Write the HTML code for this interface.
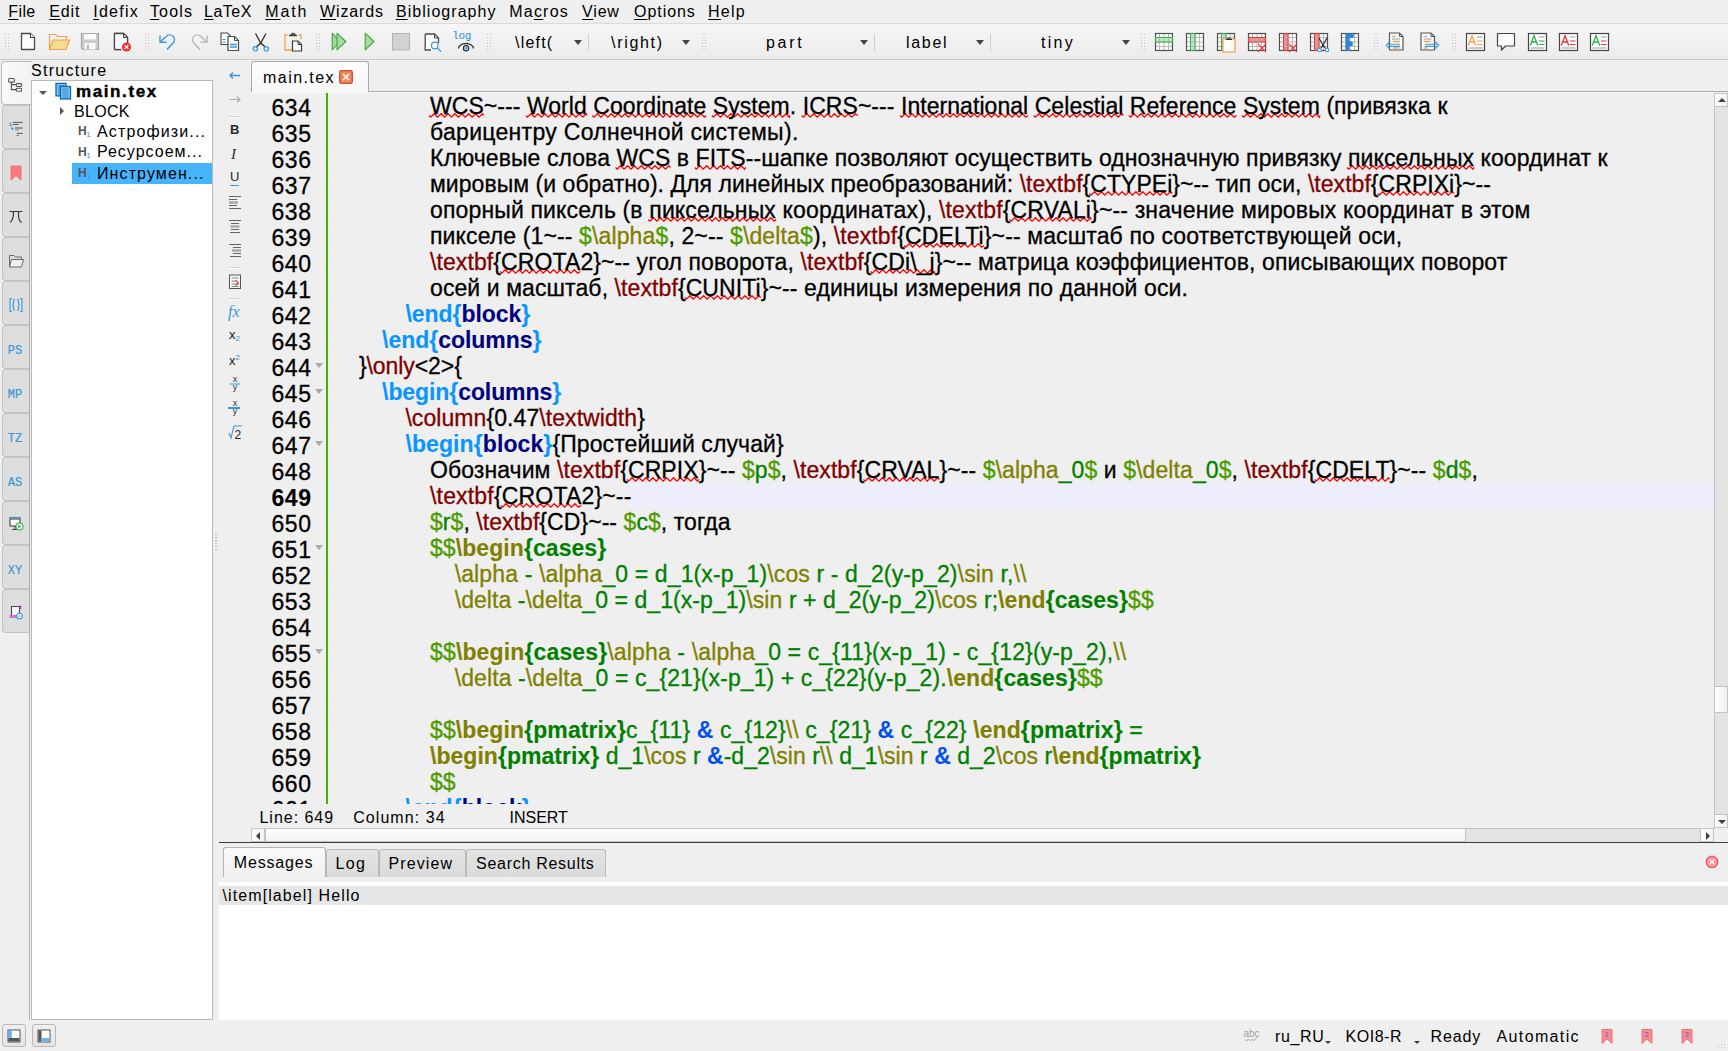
<!DOCTYPE html>
<html><head><meta charset="utf-8">
<style>
*{margin:0;padding:0;box-sizing:border-box}
html,body{width:1728px;height:1051px;overflow:hidden;background:#efefef;font-family:"Liberation Sans",sans-serif;color:#000}
.a{position:absolute}
#menubar{left:0;top:0;width:1728px;height:24px;background:#efefef;border-bottom:1px solid #dadada}
#menubar span{position:absolute;top:2.8px;font-size:16px;line-height:18px;white-space:nowrap}
#menubar ins{text-decoration:underline;text-decoration-thickness:1px;text-underline-offset:2px}
#toolbar{left:0;top:24px;width:1728px;height:36px;background:linear-gradient(#f6f6f6,#ececec);border-bottom:1px solid #c9c9c9}
.grip{position:absolute;width:6px;height:17px;background-image:radial-gradient(circle,#c2c2c2 .7px,transparent 1px);background-size:3px 3px}
.combo{position:absolute;top:10.3px;font-size:16px;line-height:18px;white-space:nowrap}
.carr{position:absolute;top:16px;width:0;height:0;border-left:4px solid transparent;border-right:4px solid transparent;border-top:5px solid #444}
.vsep{position:absolute;top:10px;width:1px;height:17px;background:#cfcfcf}
.ico{position:absolute}
/* editor */
#editor{left:251px;top:93px;width:1463px;height:711px;background:#efefef;overflow:hidden;-webkit-text-stroke:.3px currentColor}
.ln{position:absolute;left:0;width:60.6px;text-align:right;font-size:23px;height:26px;line-height:30px;letter-spacing:.6px}
.ln.cur{font-weight:bold;-webkit-text-stroke:.1px currentColor}
.tx{position:absolute;white-space:pre;font-size:23px;height:26px;line-height:26px}
.curl{position:absolute;left:78px;width:1385px;height:26px;background:#eeedfb}
.gline{position:absolute;left:75px;top:0;width:2px;height:711px;background:#3cb400}
.fold{position:absolute;left:64px;width:0;height:0;border-left:4px solid transparent;border-right:4px solid transparent;border-top:5px solid #a8a8a8}
k{color:#800000}
bg{color:#0a96ff;font-weight:bold;-webkit-text-stroke:.1px currentColor}
en{color:#000080;font-weight:bold;-webkit-text-stroke:.1px currentColor}
dz{color:#4e9c00}
mo{color:#808000}
mg{color:#008000}
mgb{color:#008000;font-weight:bold;-webkit-text-stroke:.1px currentColor}
mob{color:#808000;font-weight:bold;-webkit-text-stroke:.1px currentColor}
am{color:#0050f0;font-weight:bold;-webkit-text-stroke:.1px currentColor}
u{text-decoration:none}

.vtab{position:absolute;left:2px;width:27px;height:43.5px;background:#dedede;border:1px solid #c3c3c3;border-right:none;border-radius:4px 0 0 4px}
.vtab.sel{left:1px;width:31px;height:44px;background:linear-gradient(90deg,#f9f9f9,#f3f3f3);border-color:#bdbdbd}
.vt{position:absolute;left:6px;width:18px;text-align:center;font-family:"Liberation Mono",monospace;font-size:12px;color:#3b98d6;line-height:14px;font-weight:normal;-webkit-text-stroke:.2px #3b98d6}
.tt{position:absolute;font-size:16px;line-height:18px;white-space:nowrap}
.tarr{position:absolute;width:0;height:0}
.tarr.down{border-left:4px solid transparent;border-right:4px solid transparent;border-top:4.5px solid #555}
.tarr.right{border-top:4px solid transparent;border-bottom:4px solid transparent;border-left:4.5px solid #555}
.tsel{position:absolute;background:#47b3fb}
.h1i{position:absolute;font-size:12px;line-height:13px;color:#555;font-weight:bold;letter-spacing:-.5px}
.h1i sub{font-size:8px;color:#3b98d6;font-weight:normal;vertical-align:-2px}
.stb{color:#2a2a2a;line-height:16px}
.frac{width:10px;height:16px;font-size:9px;line-height:7px;color:#333;text-align:center}
.frac span{display:block;height:7.5px}
.frac i{position:absolute;left:0;top:7px;width:10px;height:1.5px}
.ui{font-size:16px;line-height:18px;white-space:nowrap;color:#000}
.sbtn{background:linear-gradient(90deg,#fdfdfd,#f2f2f2);border:1px solid #c4c4c4}
.tri{position:absolute;width:0;height:0}
.tri.up{left:2.5px;top:4px;border-left:4px solid transparent;border-right:4px solid transparent;border-bottom:4px solid #404040}
.tri.dn{left:2.5px;top:5px;border-left:4px solid transparent;border-right:4px solid transparent;border-top:4px solid #404040}
.tri.lt{left:4px;top:2.5px;border-top:4px solid transparent;border-bottom:4px solid transparent;border-right:4px solid #404040}
.tri.rt{left:4.5px;top:2.5px;border-top:4px solid transparent;border-bottom:4px solid transparent;border-left:4px solid #404040}
.tri.sm{border-left-width:3px;border-right-width:3px;border-top-width:3px}
.mtab{top:849px;height:28px;background:linear-gradient(#e4e4e4,#dadada);border:1px solid #bababa;border-bottom:none;border-radius:3px 3px 0 0}
.bbtn{width:24px;height:23px;border:1px solid #b8b8b8;border-radius:3px;background:linear-gradient(#f0f0f0,#e4e4e4)}
.bbtn svg{position:absolute;left:0;top:0}
</style></head><body>
<div id="menubar" class="a">
<span style="left:8.3px;letter-spacing:0.37px"><ins>F</ins>ile</span>
<span style="left:49.3px;letter-spacing:0.83px"><ins>E</ins>dit</span>
<span style="left:93.3px;letter-spacing:1.23px"><ins>I</ins>defix</span>
<span style="left:149.9px;letter-spacing:1.19px"><ins>T</ins>ools</span>
<span style="left:204.1px;letter-spacing:0.48px"><ins>L</ins>aTeX</span>
<span style="left:265.3px;letter-spacing:1.81px"><ins>M</ins>ath</span>
<span style="left:320.0px;letter-spacing:0.87px"><ins>W</ins>izards</span>
<span style="left:395.9px;letter-spacing:1.05px"><ins>B</ins>ibliography</span>
<span style="left:509.3px;letter-spacing:1.19px">Ma<ins>c</ins>ros</span>
<span style="left:582.1px;letter-spacing:0.79px"><ins>V</ins>iew</span>
<span style="left:634.1px;letter-spacing:0.93px"><ins>O</ins>ptions</span>
<span style="left:708.1px;letter-spacing:1.2px"><ins>H</ins>elp</span>
</div>
<div id="toolbar" class="a">
<div class="grip" style="left:4px;top:9px"></div>
<svg class="ico" style="left:20px;top:8px" width="16" height="19" viewBox="0 0 16 19"><path d="M1.5 1.5h9l4 4v12h-13z" fill="#fdfdfd" stroke="#4a4a4a" stroke-width="1.3" stroke-linejoin="round"/><path d="M10.5 1.5v4h4" fill="#fff" stroke="#4a4a4a" stroke-width="1.1"/></svg>
<svg class="ico" style="left:48px;top:9px" width="23" height="18" viewBox="0 0 23 18"><path d="M1.5 16.5V1.5h6l2 2h9v3" fill="none" stroke="#f0a050" stroke-width="1.2"/><path d="M1.5 16.5l3.5-9.5h16.5l-3.5 9.5z" fill="#f8dc8e" stroke="#f0a050" stroke-width="1.2" stroke-linejoin="round"/></svg>
<svg class="ico" style="left:80px;top:8px" width="20" height="19" viewBox="0 0 20 19"><path d="M1.5 1.5h17v16h-15.5l-1.5-1.5z" fill="#cbcbcb" stroke="#a8a8a8" stroke-width="1.2"/><rect x="4" y="2" width="12" height="5.5" fill="#fafafa"/><rect x="4.5" y="11" width="11" height="6.5" fill="#fafafa"/><rect x="7" y="12.5" width="2" height="5" fill="#b8b8b8"/></svg>
<svg class="ico" style="left:113px;top:8px" width="20" height="20" viewBox="0 0 20 20"><path d="M1.5 1.5h9l4 4v7M8 17.5h-6.5v-16" fill="#fdfdfd" stroke="#4a4a4a" stroke-width="1.3" stroke-linejoin="round"/><path d="M1.5 1.5h9l4 4v12h-13z" fill="#fdfdfd" stroke="none"/><path d="M1.5 17.5v-16h9l4 4v6" fill="none" stroke="#4a4a4a" stroke-width="1.3"/><path d="M1.5 17.5h7" stroke="#4a4a4a" stroke-width="1.3"/><path d="M10.5 1.5v4h4" fill="none" stroke="#4a4a4a" stroke-width="1.1"/><circle cx="13.5" cy="15" r="4.6" fill="#e8343a"/><path d="M11.6 13.1l3.8 3.8M15.4 13.1l-3.8 3.8" stroke="#fff" stroke-width="1.2"/></svg>
<div class="grip" style="left:144px;top:9px"></div>
<svg class="ico" style="left:158px;top:8px" width="20" height="20" viewBox="0 0 20 20"><path d="M9 17.5l6-6.5a4.6 4.6 0 0 0-6.5-6.8L2 10" fill="none" stroke="#3b98d6" stroke-width="1.4"/><path d="M2 3.5V10.2h6.5" fill="none" stroke="#3b98d6" stroke-width="1.4"/></svg>
<svg class="ico" style="left:189px;top:8px" width="20" height="20" viewBox="0 0 20 20"><path d="M11 17.5l-6-6.5a4.6 4.6 0 0 1 6.5-6.8L18 10" fill="none" stroke="#b4b4b4" stroke-width="1.3"/><path d="M18 3.5V10.2h-6.5" fill="none" stroke="#b4b4b4" stroke-width="1.3"/></svg>
<svg class="ico" style="left:220px;top:8px" width="20" height="20" viewBox="0 0 20 20"><path d="M1 1h6.5l3 3v8.5h-9.5z" fill="#fdfdfd" stroke="#4a4a4a" stroke-width="1.1"/><path d="M2.5 7.5h3M2.5 10h3" stroke="#3b98d6" stroke-width="1.2"/><path d="M8 4.5h6.5l4 4v10h-10.5z" fill="#fdfdfd" stroke="#4a4a4a" stroke-width="1.2"/><path d="M14.5 4.5v4h4" fill="none" stroke="#4a4a4a" stroke-width="1"/><path d="M10 12.5h7M10 15h7" stroke="#3b98d6" stroke-width="1.4"/></svg>
<svg class="ico" style="left:252px;top:8px" width="18" height="20" viewBox="0 0 18 20"><path d="M3.5 1.5l5.2 9.5M14 1.5l-5.2 9.5M8.7 11l-4.5 4M8.7 11l4.5 4" fill="none" stroke="#2a2a2a" stroke-width="1.3"/><circle cx="3.3" cy="16.8" r="2.2" fill="none" stroke="#3b98d6" stroke-width="1.2"/><circle cx="14.2" cy="16.8" r="2.2" fill="none" stroke="#3b98d6" stroke-width="1.2"/></svg>
<svg class="ico" style="left:284px;top:8px" width="19" height="20" viewBox="0 0 19 20"><path d="M3.5 3h-2.5v15h7M14.5 3h2.5v4" fill="none" stroke="#f5a04a" stroke-width="1.3"/><path d="M5 3.5h8M7 3.5a2 2 0 0 1 4 0" fill="none" stroke="#3a3a3a" stroke-width="1.3"/><path d="M8.5 9h5.5l3.5 3.5v6.5h-9z" fill="#fdfdfd" stroke="#3a3a3a" stroke-width="1.2"/><path d="M14 9v3.5h3.5" fill="none" stroke="#3a3a3a" stroke-width="1"/></svg>
<div class="grip" style="left:315px;top:9px"></div>
<svg class="ico" style="left:331px;top:8px" width="16" height="19" viewBox="0 0 16 19"><path d="M1.2 1.2l7.5 8.3-7.5 8.3z" fill="#a6dba6" stroke="#45a045" stroke-width="1.1" stroke-linejoin="round"/><path d="M6 1.2l8.8 8.3-8.8 8.3z" fill="#a6dba6" stroke="#45a045" stroke-width="1.1" stroke-linejoin="round"/></svg>
<svg class="ico" style="left:364px;top:8px" width="11" height="19" viewBox="0 0 11 19"><path d="M1.2 1.2l8.8 8.3-8.8 8.3z" fill="#a6dba6" stroke="#45a045" stroke-width="1.1" stroke-linejoin="round"/></svg>
<svg class="ico" style="left:391px;top:8px" width="20" height="19" viewBox="0 0 20 19"><rect x="1.5" y="1.5" width="17" height="16.5" fill="#d2d2d2" stroke="#b4b4b4" stroke-width="1"/></svg>
<svg class="ico" style="left:424px;top:9px" width="19" height="19" viewBox="0 0 19 19"><path d="M1.2 1h9.3l4 4v12h-13.3z" fill="#fdfdfd"/><path d="M1.2 1h9.3l4 4v5M7 17h-5.8v-16" fill="none" stroke="#4a4a4a" stroke-width="1.3"/><path d="M10.5 1v4h4" fill="none" stroke="#4a4a4a" stroke-width="1"/><circle cx="10.8" cy="12.5" r="3.3" fill="#fdfdfd" stroke="#3b98d6" stroke-width="1.2"/><path d="M13.2 14.8l3.8 3.8" stroke="#3b98d6" stroke-width="1.3"/></svg>
<svg class="ico" style="left:451px;top:6px" width="24" height="22" viewBox="0 0 24 22"><text x="1.5" y="9" font-family="Liberation Mono" font-size="10.5" fill="#3b98d6" stroke="#3b98d6" stroke-width=".2">log</text><path d="M7.5 18.5a7.5 5 0 0 1 15 0" fill="none" stroke="#333" stroke-width="1.3"/><circle cx="15" cy="18.3" r="2.6" fill="#fff" stroke="#333" stroke-width="1.3"/><circle cx="15" cy="18.3" r="1.2" fill="#3b98d6"/></svg>
<div class="grip" style="left:486px;top:9px"></div>
<span class="combo" style="left:515px;letter-spacing:1.2px">\left(</span><div class="carr" style="left:574px"></div><div class="vsep" style="left:588px"></div>
<span class="combo" style="left:611px;letter-spacing:1.7px">\right)</span><div class="carr" style="left:682px"></div><div class="grip" style="left:701px;top:9px"></div>
<span class="combo" style="left:766px;letter-spacing:2.7px">part</span><div class="carr" style="left:860px"></div><div class="vsep" style="left:874px"></div>
<span class="combo" style="left:906px;letter-spacing:1.7px">label</span><div class="carr" style="left:976px"></div><div class="vsep" style="left:990px"></div>
<span class="combo" style="left:1041px;letter-spacing:2.3px">tiny</span><div class="carr" style="left:1122px"></div><div class="grip" style="left:1140px;top:9px"></div>
<svg class="ico" style="left:1154px;top:8px" width="21" height="21" viewBox="0 0 21 21"><rect x="1" y="1" width="18" height="18" fill="#fcfcfc"/><rect x="1.5" y="5.5" width="17" height="4.5" fill="#bfe5c4"/><path d="M5.5 1.5v17M1.5 5.5h17" stroke="#b9b9b9" stroke-width="1"/><path d="M10 1.5v17M1.5 10h17" stroke="#b9b9b9" stroke-width="1"/><path d="M14.5 1.5v17M1.5 14.5h17" stroke="#b9b9b9" stroke-width="1"/><rect x="1.5" y="1.5" width="17" height="17" fill="none" stroke="#505050" stroke-width="1.2"/><rect x="1.5" y="5.5" width="17" height="4.5" fill="none" stroke="#33b050" stroke-width="1"/></svg>
<svg class="ico" style="left:1185px;top:8px" width="21" height="21" viewBox="0 0 21 21"><rect x="1" y="1" width="18" height="18" fill="#fcfcfc"/><rect x="5.5" y="1.5" width="4.5" height="17" fill="#bfe5c4"/><path d="M5.5 1.5v17M1.5 5.5h17" stroke="#b9b9b9" stroke-width="1"/><path d="M10 1.5v17M1.5 10h17" stroke="#b9b9b9" stroke-width="1"/><path d="M14.5 1.5v17M1.5 14.5h17" stroke="#b9b9b9" stroke-width="1"/><rect x="1.5" y="1.5" width="17" height="17" fill="none" stroke="#505050" stroke-width="1.2"/><rect x="5.5" y="1.5" width="4.5" height="17" fill="none" stroke="#33b050" stroke-width="1"/></svg>
<svg class="ico" style="left:1216px;top:8px" width="21" height="21" viewBox="0 0 21 21"><rect x="1" y="1" width="18" height="18" fill="#fcfcfc"/><rect x="5.5" y="1.5" width="4.5" height="17" fill="#bfe5c4"/><path d="M5.5 1.5v17M1.5 5.5h17" stroke="#b9b9b9" stroke-width="1"/><path d="M10 1.5v17M1.5 10h17" stroke="#b9b9b9" stroke-width="1"/><path d="M14.5 1.5v17M1.5 14.5h17" stroke="#b9b9b9" stroke-width="1"/><rect x="1.5" y="1.5" width="17" height="17" fill="none" stroke="#505050" stroke-width="1.2"/><rect x="5.5" y="1.5" width="4.5" height="17" fill="none" stroke="#33b050" stroke-width="1"/><rect x="7" y="7" width="12" height="13" fill="#fcfcfc" stroke="#f5a04a" stroke-width="1.2"/><path d="M10 7.5h6M11.5 7.5a1.5 1.5 0 0 1 3 0" fill="none" stroke="#333" stroke-width="1.1"/></svg>
<svg class="ico" style="left:1247px;top:8px" width="21" height="21" viewBox="0 0 21 21"><rect x="1" y="1" width="18" height="18" fill="#fcfcfc"/><rect x="1.5" y="5.5" width="17" height="4.5" fill="#f08a8a"/><path d="M5.5 1.5v17M1.5 5.5h17" stroke="#b9b9b9" stroke-width="1"/><path d="M10 1.5v17M1.5 10h17" stroke="#b9b9b9" stroke-width="1"/><path d="M14.5 1.5v17M1.5 14.5h17" stroke="#b9b9b9" stroke-width="1"/><rect x="1.5" y="1.5" width="17" height="17" fill="none" stroke="#505050" stroke-width="1.2"/><rect x="1.5" y="5.5" width="17" height="4.5" fill="none" stroke="#e03c3c" stroke-width="1"/><rect x="10" y="11" width="11" height="10" fill="#f4f4f4" opacity="0"/><path d="M11 12l8 8M19 12l-8 8" stroke="#e8343a" stroke-width="1.1"/></svg>
<svg class="ico" style="left:1278px;top:8px" width="21" height="21" viewBox="0 0 21 21"><rect x="1" y="1" width="18" height="18" fill="#fcfcfc"/><rect x="5.5" y="1.5" width="4.5" height="17" fill="#f08a8a"/><path d="M5.5 1.5v17M1.5 5.5h17" stroke="#b9b9b9" stroke-width="1"/><path d="M10 1.5v17M1.5 10h17" stroke="#b9b9b9" stroke-width="1"/><path d="M14.5 1.5v17M1.5 14.5h17" stroke="#b9b9b9" stroke-width="1"/><rect x="1.5" y="1.5" width="17" height="17" fill="none" stroke="#505050" stroke-width="1.2"/><rect x="5.5" y="1.5" width="4.5" height="17" fill="none" stroke="#e03c3c" stroke-width="1"/><path d="M11 12l8 8M19 12l-8 8" stroke="#e8343a" stroke-width="1.1"/></svg>
<svg class="ico" style="left:1309px;top:8px" width="21" height="21" viewBox="0 0 21 21"><rect x="1" y="1" width="18" height="18" fill="#fcfcfc"/><rect x="5.5" y="1.5" width="4.5" height="17" fill="#f08a8a"/><path d="M5.5 1.5v17M1.5 5.5h17" stroke="#b9b9b9" stroke-width="1"/><path d="M10 1.5v17M1.5 10h17" stroke="#b9b9b9" stroke-width="1"/><path d="M14.5 1.5v17M1.5 14.5h17" stroke="#b9b9b9" stroke-width="1"/><rect x="1.5" y="1.5" width="17" height="17" fill="none" stroke="#505050" stroke-width="1.2"/><rect x="5.5" y="1.5" width="4.5" height="17" fill="none" stroke="#e03c3c" stroke-width="1"/><path d="M10 6l5 9M18 6l-5 9M14 13l-3 4M14 13l3 4" stroke="#222" stroke-width="1.1" fill="none"/><circle cx="10.5" cy="18" r="1.8" fill="#fff" stroke="#3b98d6" stroke-width="1.1"/><circle cx="18" cy="18" r="1.8" fill="#fff" stroke="#3b98d6" stroke-width="1.1"/></svg>
<svg class="ico" style="left:1340px;top:8px" width="21" height="21" viewBox="0 0 21 21"><rect x="1" y="1" width="18" height="18" fill="#fcfcfc"/><path d="M5.5 1.5h8v4.5h-4v3.5h3v4.5h-3v5h-4z" fill="#2f86d6"/><path d="M5.5 1.5v17M1.5 5.5h17" stroke="#b9b9b9" stroke-width="1"/><path d="M10 1.5v17M1.5 10h17" stroke="#b9b9b9" stroke-width="1"/><path d="M14.5 1.5v17M1.5 14.5h17" stroke="#b9b9b9" stroke-width="1"/><rect x="1.5" y="1.5" width="17" height="17" fill="none" stroke="#505050" stroke-width="1.2"/><path d="M5.5 1.5h8v4.5h-4v3.5h3v4.5h-3v5h-4z" fill="#2f86d6"/></svg>
<div class="grip" style="left:1373px;top:9px"></div>
<svg class="ico" style="left:1385px;top:8px" width="22" height="20" viewBox="0 0 22 20"><path d="M4.5 1h10l3.5 3.5v13.5h-13.5z" fill="#fdfdfd" stroke="#555" stroke-width="1.2"/><path d="M14.5 1v3.5h3.5" fill="none" stroke="#555" stroke-width="1"/><path d="M7 4.5h4M7 7h8" stroke="#bbb" stroke-width="1.3"/><path d="M8 9.5h7M8 16h4" stroke="#f5a04a" stroke-width="1.3"/><path d="M12 16h4" stroke="#bbb" stroke-width="1.3"/><path d="M15 12.2h-11.5M15 14.4h-11.5M4.5 10l-3.2 3.3 3.2 3.3" fill="none" stroke="#3b98d6" stroke-width="1.1"/></svg>
<svg class="ico" style="left:1419px;top:8px" width="22" height="20" viewBox="0 0 22 20"><path d="M2 1h10l3.5 3.5v13.5h-13.5z" fill="#fdfdfd" stroke="#555" stroke-width="1.2"/><path d="M12 1v3.5h3.5" fill="none" stroke="#555" stroke-width="1"/><path d="M4.5 4.5h4M4.5 7h8" stroke="#bbb" stroke-width="1.3"/><path d="M4.5 9.5h7M4.5 16h4" stroke="#f5a04a" stroke-width="1.3"/><path d="M6 12.2h11.5M6 14.4h11.5M16.5 10l3.2 3.3-3.2 3.3" fill="none" stroke="#3b98d6" stroke-width="1.1"/></svg>
<div class="grip" style="left:1451px;top:9px"></div>
<svg class="ico" style="left:1465px;top:8px" width="21" height="20" viewBox="0 0 21 20"><rect x="1.5" y="1.5" width="18" height="17" fill="#fcfcfc" stroke="#444" stroke-width="1.2"/><path d="M3.3 13.5l3.7-10 3.7 10M4.6 10h4.8" fill="none" stroke="#f5a04a" stroke-width="1.3"/><path d="M12 5h5.5" stroke="#b8b8b8" stroke-width="1.4"/><path d="M12 9h5.5M12 12.5h5.5" stroke="#f5a04a" stroke-width="1.2"/><path d="M3.5 16h14" stroke="#b8b8b8" stroke-width="1.4"/></svg>
<svg class="ico" style="left:1496px;top:8px" width="21" height="20" viewBox="0 0 21 20"><path d="M1.5 1.5h17v12.5h-9l-4 4v-4h-4z" fill="#fcfcfc" stroke="#444" stroke-width="1.2" stroke-linejoin="round"/></svg>
<svg class="ico" style="left:1527px;top:8px" width="21" height="20" viewBox="0 0 21 20"><rect x="1.5" y="1.5" width="18" height="17" fill="#fcfcfc" stroke="#444" stroke-width="1.2"/><path d="M3.3 13.5l3.7-10 3.7 10M4.6 10h4.8" fill="none" stroke="#2ab04a" stroke-width="1.3"/><path d="M12 5h5.5" stroke="#b8b8b8" stroke-width="1.4"/><path d="M12 9h5.5M12 12.5h5.5" stroke="#2ab04a" stroke-width="1.2"/><path d="M3.5 16h14" stroke="#b8b8b8" stroke-width="1.4"/></svg>
<svg class="ico" style="left:1558px;top:8px" width="21" height="20" viewBox="0 0 21 20"><rect x="1.5" y="1.5" width="18" height="17" fill="#fcfcfc" stroke="#444" stroke-width="1.2"/><path d="M3.3 13.5l3.7-10 3.7 10M4.6 10h4.8" fill="none" stroke="#e8343a" stroke-width="1.3"/><path d="M12 5h5.5" stroke="#b8b8b8" stroke-width="1.4"/><path d="M12 9h5.5M12 12.5h5.5" stroke="#e8343a" stroke-width="1.2"/><path d="M3.5 16h14" stroke="#b8b8b8" stroke-width="1.4"/></svg>
<svg class="ico" style="left:1589px;top:8px" width="21" height="20" viewBox="0 0 21 20"><rect x="1.5" y="1.5" width="18" height="17" fill="#fcfcfc" stroke="#444" stroke-width="1.2"/><path d="M3.3 13.5l3.7-10 3.7 10M4.6 10h4.8" fill="none" stroke="#2ab04a" stroke-width="1.3"/><path d="M12 5h5.5" stroke="#b8b8b8" stroke-width="1.4"/><path d="M12 9h5.5M12 12.5h5.5" stroke="#e8343a" stroke-width="1.2"/><path d="M3.5 16h14" stroke="#b8b8b8" stroke-width="1.4"/></svg>
</div>

<div class="a" style="left:0;top:61px;width:31px;height:960px;">
</div>
<div class="vtab" style="top:105px"></div>
<div class="vtab" style="top:149px"></div>
<div class="vtab" style="top:193px"></div>
<div class="vtab" style="top:237px"></div>
<div class="vtab" style="top:281px"></div>
<div class="vtab" style="top:325px"></div>
<div class="vtab" style="top:369px"></div>
<div class="vtab" style="top:413px"></div>
<div class="vtab" style="top:457px"></div>
<div class="vtab" style="top:501px"></div>
<div class="vtab" style="top:545px"></div>
<div class="vtab" style="top:589px"></div>
<div class="vtab sel" style="top:61px"></div>
<div class="a" style="left:29px;top:105px;width:1px;height:915px;background:#b0b0b0"></div>
<svg class="ico" style="left:7px;top:77px" width="16" height="16" viewBox="0 0 16 16"><rect x="1.6" y="1.5" width="5.8" height="3.6" rx="1" fill="#fff" stroke="#555" stroke-width="1.1"/><path d="M4.4 5.2v7.4h4.8M4.4 7.6h4.8" fill="none" stroke="#555" stroke-width="1.1"/><rect x="9.3" y="6.6" width="5.2" height="2.9" rx=".8" fill="#fff" stroke="#555" stroke-width="1.1"/><rect x="9.3" y="11.3" width="5.2" height="3" rx=".8" fill="#fff" stroke="#555" stroke-width="1.1"/></svg>
<svg class="ico" style="left:8px;top:119px" width="16" height="18" viewBox="0 0 16 18"><path d="M4.9 3.4h9.8M4.9 5.5h5.8" stroke="#555" stroke-width="1"/><path d="M7 9h7.7" stroke="#777" stroke-width="1.4"/><path d="M7 10.8h4" stroke="#aaa" stroke-width="2"/><path d="M8.7 14.4h6M8.7 16.5h1.8" stroke="#555" stroke-width="1"/><circle cx="2.5" cy="4.3" r=".9" fill="#3b98d6"/><circle cx="2.9" cy="6.5" r="1" fill="#3b98d6"/><circle cx="4.4" cy="9.6" r="1.1" fill="#2a88d0"/></svg>
<svg class="ico" style="left:10px;top:165px" width="12" height="16" viewBox="0 0 12 16"><path d="M1 1h10v14l-5-4.5-5 4.5z" fill="#fb7b80" stroke="#f35f65" stroke-width=".8"/></svg>
<svg class="ico" style="left:8px;top:209px" width="16" height="16" viewBox="0 0 16 16"><path d="M1.5 2.5h13M5.5 2.5c0 6-.5 9-3.5 11M10.5 2.5c-.3 7 .3 10.5 3.5 11" fill="none" stroke="#3a3a3a" stroke-width="1.2"/></svg>
<svg class="ico" style="left:8px;top:254px" width="17" height="15" viewBox="0 0 17 15"><path d="M1.5 13V1.5h4.5l1.5 1.5h6v2" fill="none" stroke="#6a6a6a" stroke-width="1"/><path d="M1.5 13l2-7.5h12l-2 7.5z" fill="#f0f0f0" stroke="#6a6a6a" stroke-width="1"/></svg>
<svg class="ico" style="left:8px;top:297px" width="16" height="16" viewBox="0 0 16 16"><path d="M4 1.5h-2v13h2M12 1.5h2v13h-2" fill="none" stroke="#3b98d6" stroke-width="1.1"/><path d="M7 2.5c-1.2 0-1.5.5-1.5 1.5v2.5c0 1-.5 1.5-1.2 1.5.7 0 1.2.5 1.2 1.5v2.5c0 1 .3 1.5 1.5 1.5M9 2.5c1.2 0 1.5.5 1.5 1.5v2.5c0 1 .5 1.5 1.2 1.5-.7 0-1.2.5-1.2 1.5v2.5c0 1-.3 1.5-1.5 1.5" fill="none" stroke="#3b98d6" stroke-width="1.1"/></svg>
<span class="vt" style="top:344px">PS</span>
<span class="vt" style="top:388px">MP</span>
<span class="vt" style="top:432px">TZ</span>
<span class="vt" style="top:476px">AS</span>
<svg class="ico" style="left:8px;top:516px" width="16" height="16" viewBox="0 0 16 16"><path d="M1 1.5h12" stroke="#3b98d6" stroke-width="1.2"/><rect x="2" y="3" width="10" height="7" fill="#fafafa" stroke="#444" stroke-width="1.1"/><path d="M7 10v3M4 13.5h5" stroke="#444" stroke-width="1.1"/><circle cx="11.5" cy="10.5" r="3.5" fill="#fff" stroke="#2ab04a" stroke-width="1.1"/><path d="M10.3 8.6l3 1.9-3 1.9z" fill="#2ab04a"/></svg>
<span class="vt" style="top:564px">XY</span>
<svg class="ico" style="left:8px;top:604px" width="16" height="16" viewBox="0 0 16 16"><path d="M3.5 2.5h8v9h-8z" fill="#fafafa" stroke="#444" stroke-width="1.1"/><path d="M11.5 1.5h1.8v3.5h-1.8z" fill="#c040c0"/><path d="M1.5 11h9v3h-9z" fill="#d070d8"/><circle cx="11.5" cy="12" r="2.8" fill="#fff" stroke="#3b98d6" stroke-width="1.1"/><path d="M10.7 10.7l2 1.3-2 1.3z" fill="#3b98d6"/></svg>
<div class="a" style="left:31px;top:61.5px;font-size:16px;letter-spacing:1.27px;line-height:18px">Structure</div>
<div class="a" id="tree" style="left:31px;top:80px;width:182px;height:940px;background:#fff;border:1px solid #b9b9b9">
<div class="tarr down" style="left:7px;top:10px"></div>
<svg class="ico" style="left:23px;top:1px" width="17" height="18" viewBox="0 0 17 18"><rect x="1" y="1.4" width="10" height="12.5" fill="#8cc4ee" stroke="#0a64b8" stroke-width="1.3"/><path d="M3 3.9h6M3 5.9h6M3 7.9h6M3 9.9h6M3 11.9h6" stroke="#1a88d0" stroke-width="1"/><rect x="5.5" y="4.5" width="10" height="12.5" fill="#8cc4ee" stroke="#0a64b8" stroke-width="1.3"/><path d="M7.5 7h6M7.5 9h6M7.5 11h6M7.5 13h6M7.5 15h6" stroke="#1a88d0" stroke-width="1"/></svg>
<div class="tt" style="left:44px;top:1.8px;font-size:17px;font-weight:bold;letter-spacing:1.6px;-webkit-text-stroke:.4px #000">main.tex</div>
<div class="tarr right" style="left:28px;top:26px"></div>
<div class="tt" style="left:42px;top:22.3px;letter-spacing:.3px">BLOCK</div>
<div class="tsel" style="left:40px;top:82px;width:140px;height:21px"></div>
<div class="h1i" style="left:46px;top:44px">H<sub>1</sub></div>
<div class="tt" style="left:65px;top:41.7px;letter-spacing:1.13px">Астрофизи...</div>
<div class="h1i" style="left:46px;top:65px">H<sub>1</sub></div>
<div class="tt" style="left:65px;top:62.2px;letter-spacing:1.0px">Ресурсоем...</div>
<div class="h1i" style="left:46px;top:86px">H<sub>1</sub></div>
<div class="tt" style="left:65px;top:83.7px;letter-spacing:1.1px">Инструмен...</div>
</div>

<!-- side toolbar -->
<svg class="ico" style="left:228px;top:70px" width="14" height="12" viewBox="0 0 14 12"><path d="M2 5.5h10M5 2.5l-3 3 3 3" fill="none" stroke="#3b98d6" stroke-width="1.5"/></svg>
<svg class="ico" style="left:228px;top:94px" width="14" height="12" viewBox="0 0 14 12"><path d="M2 5.5h10M9 2.5l3 3-3 3" fill="none" stroke="#aaa" stroke-width="1.1"/></svg>
<div class="a" style="left:229px;top:116px;width:12px;height:1px;background:#d4d4d4;border-bottom:1px solid #fafafa;box-sizing:content-box"></div>
<div class="a stb" style="left:230px;top:122px;font-weight:bold;font-size:13px">B</div>
<div class="a stb" style="left:231px;top:146px;font-style:italic;font-family:'Liberation Serif',serif;font-size:15px">I</div>
<div class="a stb" style="left:230px;top:170px;font-size:13px;border-bottom:1.5px solid #3b98d6;line-height:14px;height:16px">U</div>
<svg class="ico" style="left:228px;top:195px" width="14" height="16" viewBox="0 0 14 16"><path d="M1 1.5h12M1 4.5h8M1 10.5h8M1 13.5h12" stroke="#666" stroke-width="1"/><path d="M1 7.5h9" stroke="#aaa" stroke-width="2.5"/></svg>
<svg class="ico" style="left:228px;top:219px" width="14" height="16" viewBox="0 0 14 16"><path d="M1 1.5h12M3 4.5h8M3 10.5h8M2 13.5h10" stroke="#666" stroke-width="1"/><path d="M2.5 7.5h9" stroke="#aaa" stroke-width="2.5"/></svg>
<svg class="ico" style="left:228px;top:243px" width="14" height="16" viewBox="0 0 14 16"><path d="M1 1.5h12M5 4.5h8M5 10.5h8M2 13.5h11" stroke="#666" stroke-width="1"/><path d="M4 7.5h9" stroke="#aaa" stroke-width="2.5"/></svg>
<div class="a" style="left:229px;top:267px;width:12px;height:1px;background:#d4d4d4;border-bottom:1px solid #fafafa;box-sizing:content-box"></div>
<svg class="ico" style="left:228px;top:274px" width="14" height="16" viewBox="0 0 14 16"><rect x="1.5" y="1" width="11" height="13.5" fill="#fafafa" stroke="#555" stroke-width="1"/><path d="M3.5 4h7M3.5 7h5M3.5 10h7M3.5 12.5h7" stroke="#777" stroke-width=".9"/><path d="M7.5 6.5l3 2.5-3 2.5" fill="none" stroke="#e8343a" stroke-width="1.1"/></svg>
<div class="a" style="left:229px;top:298px;width:12px;height:1px;background:#d4d4d4;border-bottom:1px solid #fafafa;box-sizing:content-box"></div>
<div class="a" style="left:228px;top:303px;font-family:'Liberation Serif',serif;font-style:italic;font-size:16px;color:#3b98d6;line-height:18px">fx</div>
<div class="a" style="left:229px;top:328px;font-size:13px;color:#222;line-height:14px">x<span style="font-size:8px;color:#3b98d6;vertical-align:-2px">2</span></div>
<div class="a" style="left:229px;top:351px;font-size:13px;color:#222;line-height:14px">x<span style="font-size:8px;color:#3b98d6;vertical-align:5px">2</span></div>
<div class="a frac" style="left:230px;top:376px"><span>x</span><i style="background:#8cc4ea"></i><span>y</span></div>
<div class="a frac" style="left:230px;top:400px"><span>x</span><i style="background:#3b98d6;left:-2px;width:12px"></i><span>y</span></div>
<svg class="ico" style="left:228px;top:425px" width="15" height="15" viewBox="0 0 15 15"><path d="M1 8l2 5 3-12h8" fill="none" stroke="#3b98d6" stroke-width="1.1"/><text x="6.5" y="13.5" font-family="Liberation Sans" font-size="12" fill="#222">2</text></svg>
<div class="a" style="left:215px;top:533px;width:2px;height:17px;background-image:radial-gradient(circle,#b8b8b8 .6px,transparent .9px);background-size:2px 3px"></div>
<!-- tab bar -->
<div class="a" style="left:251px;top:91px;width:1477px;height:1px;background:#ababab"></div>
<div class="a" style="left:251px;top:92px;width:1463px;height:1px;background:#fbfbfb"></div><div class="a" id="tab" style="left:251px;top:61px;width:118px;height:31px;background:linear-gradient(#fdfdfd,#f6f6f6);border:1px solid #ababab;border-bottom:none;border-radius:3px 3px 0 0"></div>
<div class="a ui" style="left:263px;top:68.5px;letter-spacing:1.45px">main.tex</div>
<svg class="ico" style="left:339px;top:70px" width="14" height="14" viewBox="0 0 14 14"><rect x=".7" y=".7" width="12.6" height="12.6" rx="1.5" fill="#ea8a5e" stroke="#dd4535" stroke-width="1.3"/><path d="M4 4l6 6M10 4l-6 6" stroke="#fff" stroke-width="1.4"/></svg>
<!-- vertical scrollbar -->
<div class="a" style="left:1714px;top:93px;width:14px;height:735px;background:#e3e3e3;border-left:1px solid #c4c4c4"></div>
<div class="a sbtn" style="left:1714px;top:93px;width:14px;height:14px"><i class="tri up"></i></div>
<div class="a" style="left:1714px;top:686px;width:14px;height:27px;background:linear-gradient(90deg,#fdfdfd,#f2f2f2);border:1px solid #c4c4c4"></div>
<div class="a sbtn" style="left:1714px;top:814px;width:14px;height:14px"><i class="tri dn"></i></div>
<!-- status line -->
<div class="a ui" style="left:259.5px;top:808.7px;letter-spacing:.97px">Line: 649</div>
<div class="a ui" style="left:353.2px;top:808.7px;letter-spacing:1.07px">Column: 34</div>
<div class="a ui" style="left:509.5px;top:808.7px;letter-spacing:0px">INSERT</div>
<!-- horizontal scrollbar -->
<div class="a" style="left:251px;top:828px;width:1463px;height:14px;background:#e3e3e3;border-top:1px solid #c4c4c4"></div>
<div class="a" style="left:265px;top:828px;width:1201px;height:14px;background:linear-gradient(#fdfdfd,#f2f2f2);border:1px solid #c4c4c4"></div>
<div class="a sbtn" style="left:251px;top:828px;width:14px;height:14px"><i class="tri lt"></i></div>
<div class="a sbtn" style="left:1700px;top:828px;width:14px;height:14px"><i class="tri rt"></i></div>
<!-- splitter dark line -->
<div class="a" style="left:219px;top:842px;width:1509px;height:1px;background:#3c3c3c"></div>
<!-- messages tabs -->
<div class="a mtab" style="left:326px;width:53px"></div>
<div class="a mtab" style="left:379px;width:87px"></div>
<div class="a mtab" style="left:466px;width:140px"></div>
<div class="a" style="left:223px;top:847px;width:103px;height:30px;background:linear-gradient(#fafafa,#f0f0f0);border:1px solid #b4b4b4;border-bottom:none;border-radius:3px 3px 0 0"></div>
<div class="a ui" style="left:233.8px;top:854.2px;letter-spacing:.81px">Messages</div>
<div class="a ui" style="left:335.5px;top:854.7px;letter-spacing:1.4px">Log</div>
<div class="a ui" style="left:388.5px;top:854.7px;letter-spacing:1.1px">Preview</div>
<div class="a ui" style="left:476px;top:854.7px;letter-spacing:.72px">Search Results</div>
<svg class="ico" style="left:1705px;top:855px" width="14" height="14" viewBox="0 0 14 14"><circle cx="7" cy="7" r="5.8" fill="#ff949c" stroke="#de5050" stroke-width="1.1"/><path d="M4.5 4.5l5 5M9.5 4.5l-5 5" stroke="#fff" stroke-width="1.1"/></svg>
<!-- message area -->
<div class="a" style="left:219px;top:882px;width:1509px;height:138px;background:#fff"></div>
<div class="a" style="left:219px;top:886px;width:1509px;height:19px;background:#e6e6e6"></div>
<div class="a ui" style="left:222.5px;top:887px;letter-spacing:1.1px">\item[label] Hello</div>
<!-- bottom status bar -->
<div class="a bbtn" style="left:2px;top:1024px"><svg width="22" height="22" viewBox="0 0 22 22"><rect x="5" y="5" width="12" height="12" fill="#fff" stroke="#555" stroke-width="1"/><rect x="5.5" y="5.5" width="3" height="11" fill="#3b98d6"/><rect x="5.5" y="13" width="11" height="3.5" fill="#555"/><rect x="5.5" y="5.5" width="3" height="7.5" fill="#6ab4ea"/></svg></div>
<div class="a bbtn" style="left:32px;top:1024px"><svg width="22" height="22" viewBox="0 0 22 22"><rect x="5" y="5" width="12" height="12" fill="#fff" stroke="#555" stroke-width="1"/><rect x="5.5" y="5.5" width="3" height="11" fill="#555"/><rect x="8.5" y="13" width="8" height="3.5" fill="#6ab4ea"/></svg></div>
<svg class="ico" style="left:1243px;top:1028px" width="17" height="16" viewBox="0 0 17 16"><text x="0.5" y="8.5" font-family="Liberation Sans" font-size="10" fill="#a0a0a0">abc</text><path d="M2 11.5l1.5 1.5 2-2 2 2 2-2 1.5 1.5 4-4" fill="none" stroke="#a8a8a8" stroke-width="1"/></svg>
<div class="a ui" style="left:1275px;top:1028.4px;letter-spacing:.65px">ru_RU</div>
<i class="a tri dn sm" style="left:1325px;top:1041px"></i>
<div class="a ui" style="left:1345.5px;top:1028.4px;letter-spacing:.54px">KOI8-R</div>
<i class="a tri dn sm" style="left:1414px;top:1041px"></i>
<div class="a ui" style="left:1430.5px;top:1028.4px;letter-spacing:.89px">Ready</div>
<div class="a ui" style="left:1496.5px;top:1028.4px;letter-spacing:1.37px">Automatic</div>
<svg class="ico" style="left:1601px;top:1029px" width="12" height="15" viewBox="0 0 12 15"><path d="M1 .5h10v14l-5-4.5-5 4.5z" fill="#fb8a90" stroke="#f06068" stroke-width=".8"/><text x="3.2" y="8" font-family="Liberation Sans" font-size="8" fill="#3b6fd6">1</text></svg>
<svg class="ico" style="left:1641px;top:1029px" width="12" height="15" viewBox="0 0 12 15"><path d="M1 .5h10v14l-5-4.5-5 4.5z" fill="#fb8a90" stroke="#f06068" stroke-width=".8"/><text x="3.2" y="8" font-family="Liberation Sans" font-size="8" fill="#3b6fd6">2</text></svg>
<svg class="ico" style="left:1681px;top:1029px" width="12" height="15" viewBox="0 0 12 15"><path d="M1 .5h10v14l-5-4.5-5 4.5z" fill="#fb8a90" stroke="#f06068" stroke-width=".8"/><text x="3.2" y="8" font-family="Liberation Sans" font-size="8" fill="#3b6fd6">3</text></svg>
<div class="a" style="left:1714px;top:1037px;width:12px;height:12px;background-image:radial-gradient(circle,#c4c4c4 .6px,transparent .9px);background-size:3px 3px;clip-path:polygon(100% 0,100% 100%,0 100%)"></div>

<div id="editor" class="a">
<div class="curl" style="top:390px;left:78px;width:5px"></div><div class="curl" style="top:390px;left:380px;width:1083px"></div>



<svg id="waves" class="a" style="left:0;top:0" width="1463" height="711"><path d="M178.0 22.45 179.7 24.15 183.2 20.75 186.6 24.15 190.1 20.75 193.5 24.15 197.0 20.75 200.4 24.15 203.9 20.75 207.3 24.15 210.8 20.75 214.2 24.15 217.7 20.75 221.1 24.15 224.6 20.75 228.0 24.15 231.5 20.75 232.8 22.45 M274.9 22.45 276.6 24.15 280.1 20.75 283.5 24.15 287.0 20.75 290.4 24.15 293.9 20.75 297.3 24.15 300.8 20.75 304.2 24.15 307.7 20.75 311.1 24.15 314.6 20.75 318.0 24.15 321.5 20.75 324.9 24.15 328.4 20.75 331.8 24.15 335.3 20.75 335.8 22.45 M341.3 22.45 343.0 24.15 346.5 20.75 349.9 24.15 353.4 20.75 356.8 24.15 360.3 20.75 363.7 24.15 367.2 20.75 370.6 24.15 374.1 20.75 377.5 24.15 381.0 20.75 384.4 24.15 387.9 20.75 391.3 24.15 394.8 20.75 398.2 24.15 401.7 20.75 405.1 24.15 408.6 20.75 412.0 24.15 415.5 20.75 418.9 24.15 422.4 20.75 425.8 24.15 429.3 20.75 432.7 24.15 436.2 20.75 439.6 24.15 443.1 20.75 446.5 24.15 450.0 20.75 453.4 24.15 455.3 22.45 M460.8 22.45 462.5 24.15 466.0 20.75 469.4 24.15 472.9 20.75 476.3 24.15 479.8 20.75 483.2 24.15 486.7 20.75 490.1 24.15 493.6 20.75 497.0 24.15 500.5 20.75 503.9 24.15 507.4 20.75 510.8 24.15 514.3 20.75 517.7 24.15 521.2 20.75 524.6 24.15 528.1 20.75 531.5 24.15 535.0 20.75 538.4 24.15 538.8 22.45 M550.7 22.45 552.4 24.15 555.9 20.75 559.3 24.15 562.8 20.75 566.2 24.15 569.7 20.75 573.1 24.15 576.6 20.75 580.0 24.15 583.5 20.75 586.9 24.15 590.4 20.75 593.8 24.15 597.3 20.75 600.7 24.15 604.2 20.75 606.9 22.45 M649.0 22.45 650.7 24.15 654.1 20.75 657.6 24.15 661.0 20.75 664.5 24.15 667.9 20.75 671.4 24.15 674.8 20.75 678.3 24.15 681.7 20.75 685.2 24.15 688.6 20.75 692.1 24.15 695.5 20.75 699.0 24.15 702.4 20.75 705.9 24.15 709.3 20.75 712.8 24.15 716.2 20.75 719.7 24.15 723.1 20.75 726.6 24.15 730.0 20.75 733.5 24.15 736.9 20.75 740.4 24.15 743.8 20.75 747.3 24.15 750.7 20.75 754.2 24.15 757.6 20.75 761.1 24.15 764.5 20.75 768.0 24.15 771.4 20.75 774.9 24.15 777.2 22.45 M782.7 22.45 784.4 24.15 787.9 20.75 791.3 24.15 794.8 20.75 798.2 24.15 801.7 20.75 805.1 24.15 808.6 20.75 812.0 24.15 815.5 20.75 818.9 24.15 822.4 20.75 825.8 24.15 829.3 20.75 832.7 24.15 836.2 20.75 839.6 24.15 843.1 20.75 846.5 24.15 850.0 20.75 853.4 24.15 856.9 20.75 860.3 24.15 863.8 20.75 867.2 24.15 870.7 20.75 872.4 22.45 M877.9 22.45 879.6 24.15 883.0 20.75 886.5 24.15 889.9 20.75 893.4 24.15 896.8 20.75 900.3 24.15 903.7 20.75 907.2 24.15 910.6 20.75 914.1 24.15 917.5 20.75 921.0 24.15 924.4 20.75 927.9 24.15 931.3 20.75 934.8 24.15 938.2 20.75 941.7 24.15 945.1 20.75 948.6 24.15 952.0 20.75 955.5 24.15 958.9 20.75 962.4 24.15 965.8 20.75 969.3 24.15 972.7 20.75 976.2 24.15 979.6 20.75 983.1 24.15 985.5 22.45 M990.9 22.45 992.6 24.15 996.1 20.75 999.5 24.15 1003.0 20.75 1006.4 24.15 1009.9 20.75 1013.3 24.15 1016.8 20.75 1020.2 24.15 1023.7 20.75 1027.1 24.15 1030.6 20.75 1034.0 24.15 1037.5 20.75 1040.9 24.15 1044.4 20.75 1047.8 24.15 1051.3 20.75 1054.7 24.15 1058.2 20.75 1061.6 24.15 1065.1 20.75 1068.5 24.15 1068.9 22.45 M364.5 74.45 366.2 76.15 369.6 72.75 373.1 76.15 376.5 72.75 380.0 76.15 383.4 72.75 386.9 76.15 390.3 72.75 393.8 76.15 397.2 72.75 400.7 76.15 404.1 72.75 407.6 76.15 411.0 72.75 414.5 76.15 417.9 72.75 419.4 74.45 M443.6 74.45 445.3 76.15 448.8 72.75 452.2 76.15 455.7 72.75 459.1 76.15 462.6 72.75 466.0 76.15 469.5 72.75 472.9 76.15 476.4 72.75 479.8 76.15 483.3 72.75 486.7 76.15 490.2 72.75 493.6 76.15 494.7 74.45 M1096.0 74.45 1097.8 76.15 1101.2 72.75 1104.7 76.15 1108.1 72.75 1111.6 76.15 1115.0 72.75 1118.5 76.15 1121.9 72.75 1125.4 76.15 1128.8 72.75 1132.3 76.15 1135.7 72.75 1139.2 76.15 1142.6 72.75 1146.1 76.15 1149.5 72.75 1153.0 76.15 1156.4 72.75 1159.9 76.15 1163.3 72.75 1166.8 76.15 1170.2 72.75 1173.7 76.15 1177.1 72.75 1180.6 76.15 1184.0 72.75 1187.5 76.15 1190.9 72.75 1194.4 76.15 1197.8 72.75 1201.3 76.15 1204.7 72.75 1208.2 76.15 1211.6 72.75 1215.1 76.15 1218.5 72.75 1222.0 76.15 1223.1 74.45 M838.3 100.45 840.0 102.15 843.5 98.75 846.9 102.15 850.4 98.75 853.8 102.15 857.3 98.75 860.7 102.15 864.2 98.75 867.6 102.15 871.1 98.75 874.5 102.15 878.0 98.75 881.4 102.15 884.9 98.75 888.3 102.15 891.8 98.75 895.2 102.15 898.7 98.75 902.1 102.15 905.6 98.75 909.0 102.15 912.5 98.75 915.9 102.15 919.4 98.75 921.3 100.45 M1126.6 100.45 1128.3 102.15 1131.8 98.75 1135.2 102.15 1138.7 98.75 1142.1 102.15 1145.6 98.75 1149.0 102.15 1152.5 98.75 1155.9 102.15 1159.4 98.75 1162.8 102.15 1166.3 98.75 1169.7 102.15 1173.2 98.75 1176.6 102.15 1180.1 98.75 1183.5 102.15 1187.0 98.75 1190.4 102.15 1193.9 98.75 1197.3 102.15 1200.8 98.75 1203.2 100.45 M397.3 126.45 399.0 128.15 402.5 124.75 405.9 128.15 409.4 124.75 412.8 128.15 416.3 124.75 419.7 128.15 423.2 124.75 426.6 128.15 430.1 124.75 433.5 128.15 437.0 124.75 440.4 128.15 443.9 124.75 447.3 128.15 450.8 124.75 454.2 128.15 457.7 124.75 461.1 128.15 464.6 124.75 468.0 128.15 471.5 124.75 474.9 128.15 478.4 124.75 481.8 128.15 485.3 124.75 488.7 128.15 492.2 124.75 495.6 128.15 499.1 124.75 502.5 128.15 506.0 124.75 509.4 128.15 512.9 124.75 516.3 128.15 519.8 124.75 523.2 128.15 525.0 126.45 M758.5 126.45 760.3 128.15 763.7 124.75 767.2 128.15 770.6 124.75 774.1 128.15 777.5 124.75 781.0 128.15 784.4 124.75 787.9 128.15 791.3 124.75 794.8 128.15 798.2 124.75 801.7 128.15 805.1 124.75 808.6 128.15 812.0 124.75 815.5 128.15 818.9 124.75 822.4 128.15 825.8 124.75 829.3 128.15 832.7 124.75 836.2 128.15 839.6 124.75 840.1 126.45 M653.0 152.45 654.8 154.15 658.2 150.75 661.7 154.15 665.1 150.75 668.6 154.15 672.0 150.75 675.5 154.15 678.9 150.75 682.4 154.15 685.8 150.75 689.3 154.15 692.7 150.75 696.2 154.15 699.6 150.75 703.1 154.15 706.5 150.75 710.0 154.15 713.4 150.75 716.9 154.15 720.3 150.75 723.8 154.15 727.2 150.75 730.7 154.15 732.8 152.45 M249.1 178.45 250.8 180.15 254.3 176.75 257.7 180.15 261.2 176.75 264.6 180.15 268.1 176.75 271.5 180.15 275.0 176.75 278.4 180.15 281.9 176.75 285.3 180.15 288.8 176.75 292.2 180.15 295.7 176.75 299.1 180.15 302.6 176.75 306.0 180.15 309.5 176.75 312.9 180.15 316.4 176.75 319.8 180.15 323.3 176.75 326.7 180.15 329.4 178.45 M619.6 178.45 621.3 180.15 624.7 176.75 628.2 180.15 631.6 176.75 635.1 180.15 638.5 176.75 642.0 180.15 645.4 176.75 648.9 180.15 652.3 176.75 655.8 180.15 659.2 176.75 662.7 180.15 666.1 176.75 669.6 180.15 673.0 176.75 676.5 180.15 679.9 176.75 683.4 180.15 683.8 178.45 M433.7 204.45 435.4 206.15 438.8 202.75 442.3 206.15 445.7 202.75 449.2 206.15 452.6 202.75 456.1 206.15 459.5 202.75 463.0 206.15 466.4 202.75 469.9 206.15 473.3 202.75 476.8 206.15 480.2 202.75 483.7 206.15 487.1 202.75 490.6 206.15 494.0 202.75 497.5 206.15 500.9 202.75 504.4 206.15 507.8 202.75 509.7 204.45 M376.0 386.45 377.7 388.15 381.1 384.75 384.6 388.15 388.0 384.75 391.5 388.15 394.9 384.75 398.4 388.15 401.8 384.75 405.3 388.15 408.7 384.75 412.2 388.15 415.6 384.75 419.1 388.15 422.5 384.75 426.0 388.15 429.4 384.75 432.9 388.15 436.3 384.75 439.8 388.15 443.2 384.75 446.7 388.15 447.7 386.45 M612.5 386.45 614.2 388.15 617.6 384.75 621.1 388.15 624.5 384.75 628.0 388.15 631.4 384.75 634.9 388.15 638.3 384.75 641.8 388.15 645.2 384.75 648.7 388.15 652.1 384.75 655.6 388.15 659.0 384.75 662.5 388.15 665.9 384.75 669.4 388.15 672.8 384.75 676.3 388.15 679.7 384.75 683.2 388.15 686.6 384.75 688.5 386.45 M1063.4 386.45 1065.2 388.15 1068.6 384.75 1072.1 388.15 1075.5 384.75 1079.0 388.15 1082.4 384.75 1085.9 388.15 1089.3 384.75 1092.8 388.15 1096.2 384.75 1099.7 388.15 1103.1 384.75 1106.6 388.15 1110.0 384.75 1113.5 388.15 1116.9 384.75 1120.4 388.15 1123.8 384.75 1127.3 388.15 1130.7 384.75 1134.2 388.15 1137.6 384.75 1138.5 386.45 M249.8 412.45 251.5 414.15 254.9 410.75 258.4 414.15 261.8 410.75 265.3 414.15 268.7 410.75 272.2 414.15 275.6 410.75 279.1 414.15 282.5 410.75 286.0 414.15 289.4 410.75 292.9 414.15 296.3 410.75 299.8 414.15 303.2 410.75 306.7 414.15 310.1 410.75 313.6 414.15 317.0 410.75 320.5 414.15 323.9 410.75 327.4 414.15 330.4 412.45" fill="none" stroke="#ff0000" stroke-width="1.3"/></svg>
<div class="gline"></div>
<div class="ln" style="top:0px">634</div>
<div class="tx" style="top:0px;left:179px;letter-spacing:0.054px"><u>WCS</u>~--- <u>World</u> <u>Coordinate</u> <u>System</u>. <u>ICRS</u>~--- <u>International</u> <u>Celestial</u> <u>Reference</u> <u>System</u> (привязка к</div>
<div class="ln" style="top:26px">635</div>
<div class="tx" style="top:26px;left:179px;letter-spacing:0.303px">барицентру Солнечной системы).</div>
<div class="ln" style="top:52px">636</div>
<div class="tx" style="top:52px;left:179px;letter-spacing:0.072px">Ключевые слова <u>WCS</u> в <u>FITS</u>--шапке позволяют осуществить однозначную привязку <u>пиксельных</u> координат к</div>
<div class="ln" style="top:78px">637</div>
<div class="tx" style="top:78px;left:179px;letter-spacing:0.042px">мировым (и обратно). Для линейных преобразований: <k>\textbf</k>{<u>CTYPEi</u>}~-- тип оси, <k>\textbf</k>{<u>CRPIXi</u>}~--</div>
<div class="ln" style="top:104px">638</div>
<div class="tx" style="top:104px;left:179px;letter-spacing:0.145px">опорный пиксель (в <u>пиксельных</u> координатах), <k>\textbf</k>{<u>CRVALi</u>}~-- значение мировых координат в этом</div>
<div class="ln" style="top:130px">639</div>
<div class="tx" style="top:130px;left:179px;letter-spacing:0.126px">пикселе (1~-- <dz>$</dz><mo>\alpha</mo><dz>$</dz>, 2~-- <dz>$</dz><mo>\delta</mo><dz>$</dz>), <k>\textbf</k>{<u>CDELTi</u>}~-- масштаб по соответствующей оси,</div>
<div class="ln" style="top:156px">640</div>
<div class="tx" style="top:156px;left:179px;letter-spacing:0.097px"><k>\textbf</k>{<u>CROTA</u>2}~-- угол поворота, <k>\textbf</k>{<u>CDi\_j</u>}~-- матрица коэффициентов, описывающих поворот</div>
<div class="ln" style="top:182px">641</div>
<div class="tx" style="top:182px;left:179px;letter-spacing:0.091px">осей и масштаб, <k>\textbf</k>{<u>CUNITi</u>}~-- единицы измерения по данной оси.</div>
<div class="ln" style="top:208px">642</div>
<div class="tx" style="top:208px;left:154.4px;letter-spacing:-0.040px"><bg>\end{</bg><en>block</en><bg>}</bg></div>
<div class="ln" style="top:234px">643</div>
<div class="tx" style="top:234px;left:131.1px;letter-spacing:-0.033px"><bg>\end{</bg><en>columns</en><bg>}</bg></div>
<div class="ln" style="top:260px">644</div>
<div class="fold" style="top:270px"></div>
<div class="tx" style="top:260px;left:107.9px;letter-spacing:-0.070px">}<k>\only</k>&lt;2&gt;{</div>
<div class="ln" style="top:286px">645</div>
<div class="fold" style="top:296px"></div>
<div class="tx" style="top:286px;left:131.1px;letter-spacing:-0.086px"><bg>\begin{</bg><en>columns</en><bg>}</bg></div>
<div class="ln" style="top:312px">646</div>
<div class="tx" style="top:312px;left:154.4px;letter-spacing:0.075px"><k>\column</k>{0.47<k>\textwidth</k>}</div>
<div class="ln" style="top:338px">647</div>
<div class="fold" style="top:348px"></div>
<div class="tx" style="top:338px;left:154.4px;letter-spacing:0.100px"><bg>\begin{</bg><en>block</en><bg>}</bg>{Простейший случай}</div>
<div class="ln" style="top:364px">648</div>
<div class="tx" style="top:364px;left:179px;letter-spacing:0.082px">Обозначим <k>\textbf</k>{<u>CRPIX</u>}~-- <dz>$</dz><mg>p</mg><dz>$</dz>, <k>\textbf</k>{<u>CRVAL</u>}~-- <dz>$</dz><mo>\alpha</mo><mg>_0</mg><dz>$</dz> и <dz>$</dz><mo>\delta</mo><mg>_0</mg><dz>$</dz>, <k>\textbf</k>{<u>CDELT</u>}~-- <dz>$</dz><mg>d</mg><dz>$</dz>,</div>
<div class="ln cur" style="top:390px">649</div>
<div class="tx" style="top:390px;left:179px;letter-spacing:0.176px"><k>\textbf</k>{<u>CROTA</u>2}~--</div>
<div class="ln" style="top:416px">650</div>
<div class="tx" style="top:416px;left:179px;letter-spacing:0.055px"><dz>$</dz><mg>r</mg><dz>$</dz>, <k>\textbf</k>{CD}~-- <dz>$</dz><mg>c</mg><dz>$</dz>, тогда</div>
<div class="ln" style="top:442px">651</div>
<div class="fold" style="top:452px"></div>
<div class="tx" style="top:442px;left:179px;letter-spacing:0.071px"><dz>$$</dz><mob>\begin</mob><mgb>{cases}</mgb></div>
<div class="ln" style="top:468px">652</div>
<div class="tx" style="top:468px;left:203.7px;letter-spacing:0.126px"><mo>\alpha</mo><mg> - </mg><mo>\alpha</mo><mg>_0 = d_1(x-p_1)</mg><mo>\cos</mo><mg> r - d_2(y-p_2)</mg><mo>\sin</mo><mg> r,</mg><mo>\\</mo></div>
<div class="ln" style="top:494px">653</div>
<div class="tx" style="top:494px;left:203.7px;letter-spacing:0.070px"><mo>\delta</mo><mg> -</mg><mo>\delta</mo><mg>_0 = d_1(x-p_1)</mg><mo>\sin</mo><mg> r + d_2(y-p_2)</mg><mo>\cos</mo><mg> r;</mg><mob>\end</mob><mgb>{cases}</mgb><dz>$$</dz></div>
<div class="ln" style="top:520px">654</div>
<div class="ln" style="top:546px">655</div>
<div class="fold" style="top:556px"></div>
<div class="tx" style="top:546px;left:179px;letter-spacing:0.141px"><dz>$$</dz><mob>\begin</mob><mgb>{cases}</mgb><mo>\alpha</mo><mg> - </mg><mo>\alpha</mo><mg>_0 = c_{11}(x-p_1) - c_{12}(y-p_2),</mg><mo>\\</mo></div>
<div class="ln" style="top:572px">656</div>
<div class="tx" style="top:572px;left:203.7px;letter-spacing:0.098px"><mo>\delta</mo><mg> -</mg><mo>\delta</mo><mg>_0 = c_{21}(x-p_1) + c_{22}(y-p_2).</mg><mob>\end</mob><mgb>{cases}</mgb><dz>$$</dz></div>
<div class="ln" style="top:598px">657</div>
<div class="ln" style="top:624px">658</div>
<div class="tx" style="top:624px;left:179px;letter-spacing:0.102px"><dz>$$</dz><mob>\begin</mob><mgb>{pmatrix}</mgb><mg>c_{11} </mg><am>&amp;</am><mg> c_{12}</mg><mo>\\</mo><mg> c_{21} </mg><am>&amp;</am><mg> c_{22} </mg><mob>\end</mob><mgb>{pmatrix}</mgb><mg> =</mg></div>
<div class="ln" style="top:650px">659</div>
<div class="tx" style="top:650px;left:179px;letter-spacing:0.033px"><mob>\begin</mob><mgb>{pmatrix}</mgb><mg> d_1</mg><mo>\cos</mo><mg> r </mg><am>&amp;</am><mg>-d_2</mg><mo>\sin</mo><mg> r</mg><mo>\\</mo><mg> d_1</mg><mo>\sin</mo><mg> r </mg><am>&amp;</am><mg> d_2</mg><mo>\cos</mo><mg> r</mg><mob>\end</mob><mgb>{pmatrix}</mgb></div>
<div class="ln" style="top:676px">660</div>
<div class="tx" style="top:676px;left:179px;letter-spacing:0.000px"><dz>$$</dz></div>
<div class="ln" style="top:702px">661</div>
<div class="tx" style="top:702px;left:154.4px;letter-spacing:0.000px"><bg>\end{</bg><en>block</en><bg>}</bg></div>
</div>
</body></html>
